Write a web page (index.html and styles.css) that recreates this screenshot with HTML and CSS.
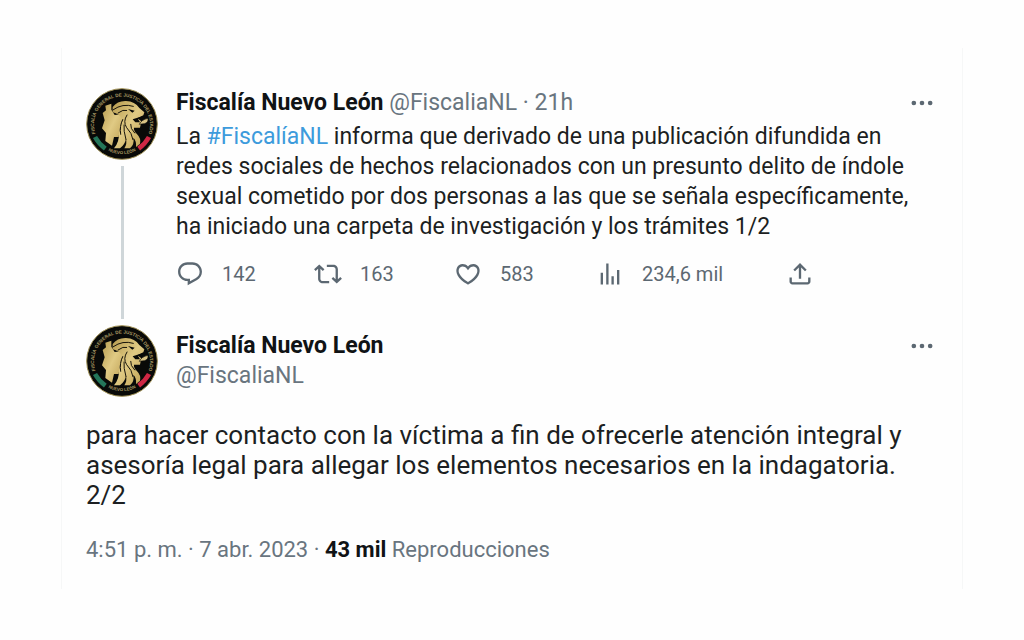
FILE: index.html
```html
<!DOCTYPE html>
<html lang="es">
<head>
<meta charset="utf-8">
<meta name="viewport" content="width=device-width, initial-scale=1">
<title>Fiscalía Nuevo León</title>
<link rel="stylesheet" href="styles.css">
</head>
<body>
<svg class="defs" aria-hidden="true">
  <defs>
    <linearGradient id="gold" x1="0" y1="0" x2="1" y2="1">
      <stop offset="0" stop-color="#b79c50"/><stop offset=".5" stop-color="#e0ca84"/><stop offset="1" stop-color="#bd9f52"/>
    </linearGradient>
    <path id="arc-top" d="M58 172A84 84 0 1 1 214 172"/>
    <path id="arc-bottom" d="M90 217A92 92 0 0 0 182 217"/>
    <symbol id="seal" viewBox="28 31 216 216">
      <circle cx="136" cy="139" r="106" fill="#090a08" stroke="#a39357" stroke-width="3"/>
      <text class="seal-text"><textPath href="#arc-top" startOffset="50%" text-anchor="middle">FISCALÍA GENERAL DE JUSTICIA DEL ESTADO</textPath></text>
      <text class="seal-small"><textPath href="#arc-bottom" startOffset="50%" text-anchor="middle">NUEVO LEÓN</textPath></text>
      <path d="M55 178Q66 198 86 213" fill="none" stroke="#247659" stroke-width="14"/>
      <path d="M186 213Q206 198 217 178" fill="none" stroke="#cf2744" stroke-width="14"/>
      <path fill="url(#gold)" d="M86 84L104 78L104 96L114 112L134 110L138 124L130 150L126 178L112 178L106 204L86 190L88 166L76 152L84 128L78 106L88 98Z"/>
      <path fill="url(#gold)" d="M108 88Q122 69 148 70Q175 71 188 91L203 104L200 113L182 122L194 131L190 150L172 150Q170 158 180 168Q194 182 190 198L178 208Q180 190 170 180Q174 200 160 212L143 212Q152 198 148 184Q144 202 130 212L112 212Q128 194 127 166Q130 142 138 126Q128 108 108 104Z"/>
      <g fill="none" stroke="#17140b" stroke-width="3" stroke-linecap="round">
        <path d="M110 96Q138 76 170 86M124 106Q140 94 150 98M138 126Q128 145 132 170M151 112Q138 132 150 150Q166 166 169 186M142 142Q140 158 148 186M162 140Q160 152 174 166"/>
      </g>
      <path fill="#090a08" d="M154 94L174 99L167 105ZM168 125L202 114L184 124L190 134L176 134Z"/>
      <path fill="#d8c384" stroke="#090a08" stroke-width="2" d="M188 140Q194 126 214 122Q216 134 204 138Z"/>
    </symbol>
    <symbol id="dots" viewBox="0 0 24 24"><path d="M3 12a2 2 0 1 1 4 0 2 2 0 0 1-4 0zm7 0a2 2 0 1 1 4 0 2 2 0 0 1-4 0zm7 0a2 2 0 1 1 4 0 2 2 0 0 1-4 0z"/></symbol>
  </defs>
</svg>
<main class="card">
  <article class="tweet">
    <div class="rail">
      <svg class="avatar" role="img" aria-label="Fiscalía Nuevo León"><use href="#seal"/></svg>
      <div class="thread"></div>
    </div>
    <div class="content">
      <header class="head">
        <div class="byline"><strong>Fiscalía Nuevo León</strong> <span class="muted">@FiscaliaNL · 21h</span></div>
        <button class="icon-button" aria-label="Más opciones"><svg class="more"><use href="#dots"/></svg></button>
      </header>
      <p class="text">La <a href="#fiscalianl">#FiscalíaNL</a> informa que derivado de una publicación difundida en<br>redes sociales de hechos relacionados con un presunto delito de índole<br>sexual cometido por dos personas a las que se señala específicamente,<br>ha iniciado una carpeta de investigación y los trámites 1/2</p>
      <div class="actions">
        <button class="action reply"><svg viewBox="0 0 24 24"><path d="M1.751 10c0-4.42 3.584-8 8.005-8h4.366c4.49 0 8.129 3.64 8.129 8.13 0 2.96-1.607 5.68-4.196 7.11l-8.054 4.46v-3.69h-.067c-4.49.1-8.183-3.51-8.183-8.01zm8.005-6c-3.317 0-6.005 2.69-6.005 6 0 3.37 2.77 6.08 6.138 6.01l.351-.01h1.761v2.3l5.087-2.81c1.951-1.08 3.163-3.13 3.163-5.36 0-3.39-2.744-6.13-6.129-6.13H9.756z"/></svg><span>142</span></button>
        <button class="action retweet"><svg viewBox="0 0 24 24"><path d="M4.5 3.88l4.432 4.14-1.364 1.46L5.5 7.55V16c0 1.1.896 2 2 2H13v2H7.5c-2.209 0-4-1.79-4-4V7.55L1.432 9.48.068 8.02 4.5 3.88zM16.5 6H11V4h5.5c2.209 0 4 1.79 4 4v8.45l2.068-1.93 1.364 1.46-4.432 4.14-4.432-4.14 1.364-1.46 2.068 1.93V8c0-1.1-.896-2-2-2z"/></svg><span>163</span></button>
        <button class="action like"><svg viewBox="0 0 24 24"><path d="M16.697 5.5c-1.222-.06-2.679.51-3.89 2.16l-.805 1.09-.806-1.09C9.984 6.01 8.526 5.44 7.304 5.5c-1.243.07-2.349.78-2.91 1.91-.552 1.12-.633 2.78.479 4.82 1.074 1.97 3.257 4.27 7.129 6.61 3.87-2.34 6.052-4.64 7.126-6.61 1.111-2.04 1.03-3.7.477-4.82-.561-1.13-1.666-1.84-2.908-1.91zm4.187 7.69c-1.351 2.48-4.001 5.12-8.379 7.67l-.503.3-.504-.3c-4.379-2.55-7.029-5.19-8.382-7.67-1.36-2.5-1.41-4.86-.514-6.67.887-1.79 2.647-2.91 4.601-3.01 1.651-.09 3.368.56 4.798 2.01 1.429-1.45 3.146-2.1 4.796-2.01 1.954.1 3.714 1.22 4.601 3.01.896 1.81.846 4.17-.514 6.67z"/></svg><span>583</span></button>
        <button class="action views"><svg viewBox="0 0 24 24"><path d="M8.75 21V3h2v18h-2zM18 21V8.5h2V21h-2zM4 21l.004-10h2L6 21H4zm9.248 0v-7h2v7h-2z"/></svg><span>234,6 mil</span></button>
        <button class="action" aria-label="Compartir"><svg viewBox="0 0 24 24"><path d="M12 2.59l5.7 5.7-1.41 1.42L13 6.41V16h-2V6.41l-3.3 3.3-1.41-1.42L12 2.59zM21 15l-.02 3.51c0 1.38-1.12 2.49-2.5 2.49H5.5C4.11 21 3 19.88 3 18.5V15h2v3.5c0 .28.22.5.5.5h12.98c.28 0 .5-.22.5-.5L19 15h2z"/></svg></button>
      </div>
    </div>
  </article>
  <article>
    <div class="tweet author">
      <svg class="avatar" role="img" aria-label="Fiscalía Nuevo León"><use href="#seal"/></svg>
      <header class="head content">
        <div class="byline"><strong>Fiscalía Nuevo León</strong><div class="muted">@FiscaliaNL</div></div>
        <button class="icon-button" aria-label="Más opciones"><svg class="more"><use href="#dots"/></svg></button>
      </header>
    </div>
    <p class="text large">para hacer contacto con la víctima a fin de ofrecerle atención integral y<br>asesoría legal para allegar los elementos necesarios en la indagatoria.<br>2/2</p>
    <footer class="meta"><time datetime="2023-04-07T16:51">4:51 p. m. · 7 abr. 2023</time> · <strong>43 mil</strong> Reproducciones</footer>
  </article>
</main>
</body>
</html>
```
FILE: styles.css
```css
* { box-sizing: border-box; }
body { margin: 0; background: #fefefe; color: #1c1f22; font-family: Roboto, "Noto Sans", sans-serif; font-size: 23px; line-height: 30px; }
.defs { position: absolute; width: 0; height: 0; }
.card { margin: 48px 61px; padding: 40px 26px 24px 24px; border: solid #f6f7f7; border-width: 0 1px; }
.tweet { display: flex; gap: 18px; }
.rail { display: flex; flex-direction: column; align-items: center; gap: 6px; }
.avatar { display: block; flex: none; width: 72px; height: 72px; }
.thread { flex: 1; width: 3px; margin-bottom: 6px; background: #cfd6d9; }
.content { flex: 1; min-width: 0; }
.head { display: flex; justify-content: space-between; align-items: flex-start; }
.byline { white-space: nowrap; }
.muted { color: #69757f; }
strong { color: #101315; font-weight: 700; }
button { padding: 0; border: 0; background: none; color: #5c6872; font: inherit; cursor: pointer; }
svg { fill: currentColor; }
.icon-button { display: flex; align-items: center; height: 30px; }
.more { width: 28px; height: 28px; }
.text { margin: 4px 0 0; }
.text a { color: #3d9bdc; text-decoration: none; }
.actions { display: flex; align-items: center; margin: 17px 0 36px; font-size: 20px; }
.action { display: flex; align-items: center; gap: 18px; }
.action svg { width: 28px; height: 28px; }
.reply { width: 138px; }
.retweet { width: 140px; }
.like { width: 142px; }
.views { width: 190px; }
.author { align-items: center; }
.large { margin-top: 23px; font-size: 26px; }
.meta { margin-top: 25px; color: #69757f; font-size: 22px; }
.seal-text, .seal-small { fill: #a99a63; font-family: "Liberation Sans", sans-serif; font-size: 14px; font-weight: 700; }
.seal-small { font-size: 13px; }
```
